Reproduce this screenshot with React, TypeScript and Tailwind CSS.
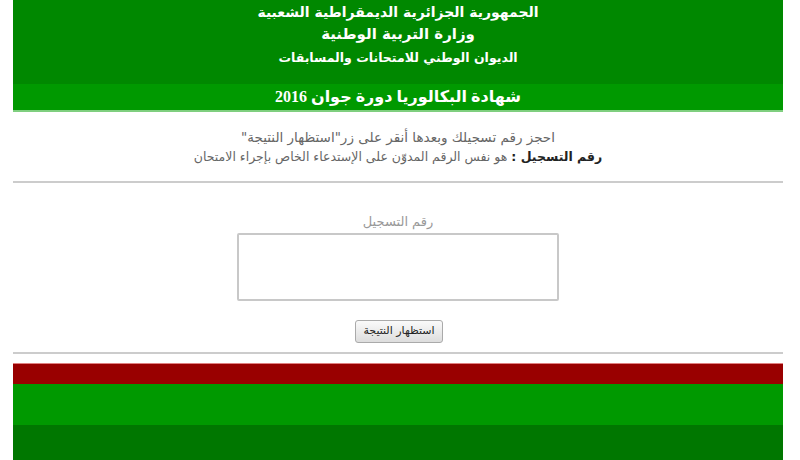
import React from "react";

const arabic = { fontFamily: '"DejaVu Sans", sans-serif' };
const serif = { fontFamily: '"Liberation Serif", "DejaVu Sans", serif' };

export default function App() {
  return (
    <div className="w-[800px] h-[460px] overflow-hidden bg-white">
      <div className="ml-[13px] w-[770px]">
        {/* header */}
        <div dir="rtl" className="h-[84px] bg-[#008800] text-white flex flex-col items-center pt-[1px]" style={arabic}>
          <div className="text-[14px] font-bold leading-[22px]">الجمهورية الجزائرية الديمقراطية الشعبية</div>
          <div className="text-[15px] font-bold leading-[22px]">وزارة التربية الوطنية</div>
          <div className="text-[12.5px] font-bold leading-[22px] mt-[2px]">الديوان الوطني للامتحانات والمسابقات</div>
        </div>
        <div dir="rtl" className="h-[28px] bg-[#009900] border-b-2 border-[#7fcf7f] flex items-center justify-center text-white text-[16px] font-bold" style={serif}>
          شهادة البكالوريا دورة جوان 2016
        </div>

        {/* instructions */}
        <div dir="rtl" className="pt-[15px] flex flex-col items-center text-[13px] leading-[20px] text-[#666666]" style={arabic}>
          <div className="text-[13.5px]">احجز رقم تسجيلك وبعدها أنقر على زر"استظهار النتيجة"</div>
          <div className="text-[12.5px]">
            <span className="font-bold text-[#222222]">رقم التسجيل :</span> هو نفس الرقم المدوّن على الإستدعاء الخاص بإجراء الامتحان
          </div>
        </div>
        <div className="mt-[14px] h-[2px] bg-[#cccccc]" />

        {/* form */}
        <div className="flex flex-col items-center pt-[29px]" style={arabic}>
          <div dir="rtl" className="text-[13px] leading-[20px] text-[#999999]">رقم التسجيل</div>
          <textarea className="mt-[1px] w-[322px] h-[68px] border-2 border-[#c8c8c8] rounded-[2px] resize-none outline-none" />
          <button
            dir="rtl"
            className="mt-[19px] ml-[2px] w-[88px] h-[23px] rounded-[3px] border border-[#aaaaaa] bg-gradient-to-b from-[#fafafa] to-[#dddddd] text-[11px] text-[#222222]"
          >
            استظهار النتيجة
          </button>
        </div>
        <div className="mt-[9px] h-[2px] bg-[#cccccc]" />

        {/* footer bands */}
        <div className="mt-[9px] h-[21px] bg-[#990000] border-t border-[#e08080]" />
        <div className="h-[41px] bg-[#009900]" />
        <div className="h-[40px] bg-[#007700]" />
      </div>
    </div>
  );
}
